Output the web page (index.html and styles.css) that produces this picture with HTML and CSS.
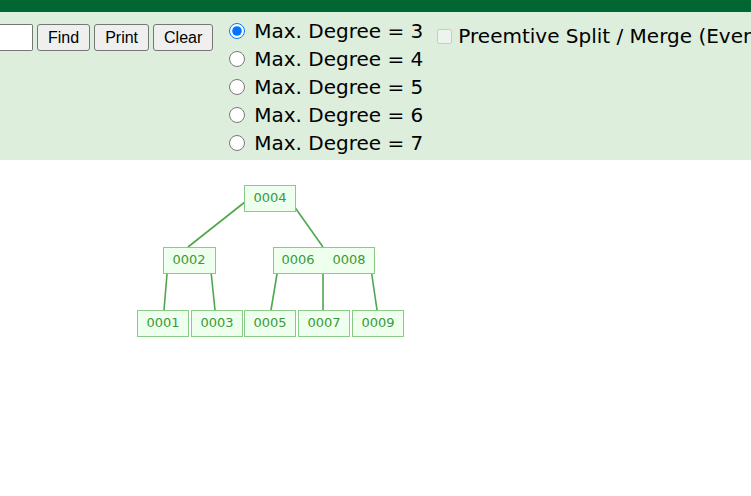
FILE: index.html
```html
<!DOCTYPE html>
<html lang="en">
<head>
    <meta charset="UTF-8">
    <title>B-Tree Visualization</title>
    <link rel="stylesheet" href="styles.css">
</head>
<body>
    <div class="topbar"></div>

    <div class="controls">
        <div class="actions">
            <input type="text" class="value-input">
            <button class="btn">Find</button>
            <button class="btn">Print</button>
            <button class="btn">Clear</button>
        </div>

        <div class="degrees">
            <label class="degree"><input type="radio" name="deg" checked> Max. Degree = 3</label>
            <label class="degree"><input type="radio" name="deg"> Max. Degree = 4</label>
            <label class="degree"><input type="radio" name="deg"> Max. Degree = 5</label>
            <label class="degree"><input type="radio" name="deg"> Max. Degree = 6</label>
            <label class="degree"><input type="radio" name="deg"> Max. Degree = 7</label>
        </div>

        <label class="preemptive"><input type="checkbox" disabled>Preemtive Split / Merge (Even max degree only)</label>
    </div>

    <svg class="canvas" width="751" height="336" viewBox="0 160 751 336">
        <g class="edges">
            <line x1="250" y1="198" x2="188" y2="247"/>
            <line x1="289" y1="199" x2="323" y2="247"/>
            <line x1="168" y1="262" x2="164" y2="310"/>
            <line x1="210" y1="262" x2="215" y2="310"/>
            <line x1="279" y1="262" x2="271" y2="310"/>
            <line x1="323" y1="262" x2="323" y2="310"/>
            <line x1="370" y1="262" x2="377" y2="310"/>
        </g>
        <g class="nodes">
            <rect x="244.5" y="185.5" width="51" height="26"/>
            <rect x="163.5" y="247.5" width="52" height="26"/>
            <rect x="273.5" y="247.5" width="101" height="26"/>
            <rect x="137.5" y="310.5" width="51" height="26"/>
            <rect x="191.5" y="310.5" width="51" height="26"/>
            <rect x="244.5" y="310.5" width="51" height="26"/>
            <rect x="298.5" y="310.5" width="51" height="26"/>
            <rect x="352.5" y="310.5" width="51" height="26"/>
        </g>
        <g class="labels">
            <text x="270" y="202">0004</text>
            <text x="189" y="264">0002</text>
            <text x="298" y="264">0006</text>
            <text x="349" y="264">0008</text>
            <text x="163" y="327">0001</text>
            <text x="217" y="327">0003</text>
            <text x="270" y="327">0005</text>
            <text x="324" y="327">0007</text>
            <text x="378" y="327">0009</text>
        </g>
    </svg>
</body>
</html>
```

FILE: styles.css
```css
* {
    box-sizing: border-box;
}

body {
    margin: 0;
    font-family: "DejaVu Sans", Verdana, sans-serif;
    background: white;
    overflow: hidden;
}

.topbar {
    height: 12px;
    background: #006633;
}

.controls {
    display: flex;
    align-items: flex-start;
    height: 148px;
    background: #ddeedd;
    white-space: nowrap;
    overflow: hidden;
}

/* поле ввода и кнопки */
.actions {
    display: flex;
    gap: 4px;
    padding-top: 12px;
    margin-right: 12px;
}

.value-input {
    width: 33px;
    height: 27px;
    margin: 0;
    border: 1px solid #767676;
    border-left: none;
    border-radius: 0 2px 2px 0;
    background: white;
}

.btn {
    height: 27px;
    padding: 0 10px;
    font-family: "Liberation Sans", Arial, sans-serif;
    font-size: 16px;
    color: black;
    background: #efefef;
    border: 1px solid #767676;
    border-radius: 3px;
}

/* переключатель степени */
.degrees {
    display: flex;
    flex-direction: column;
    padding-top: 5px;
}

.degree {
    display: flex;
    align-items: center;
    height: 28px;
    font-size: 20px;
    color: black;
}

.degree input {
    width: 16px;
    height: 16px;
    margin: 0 9px 0 4px;
    accent-color: #0075ff;
}

.preemptive {
    display: flex;
    align-items: center;
    margin-left: 14px;
    padding-top: 12px;
    font-size: 20px;
    color: black;
}

.preemptive input {
    width: 15px;
    height: 15px;
    margin: 0 6px 0 0;
}

/* дерево */
.canvas {
    display: block;
}

.edges line {
    stroke: #4ea64e;
    stroke-width: 1.6;
}

.nodes rect {
    fill: #eeffee;
    stroke: #88cc88;
    stroke-width: 1;
}

.labels text {
    font-family: "DejaVu Sans", Verdana, sans-serif;
    font-size: 13px;
    fill: #3a9a3a;
    text-anchor: middle;
}
```
